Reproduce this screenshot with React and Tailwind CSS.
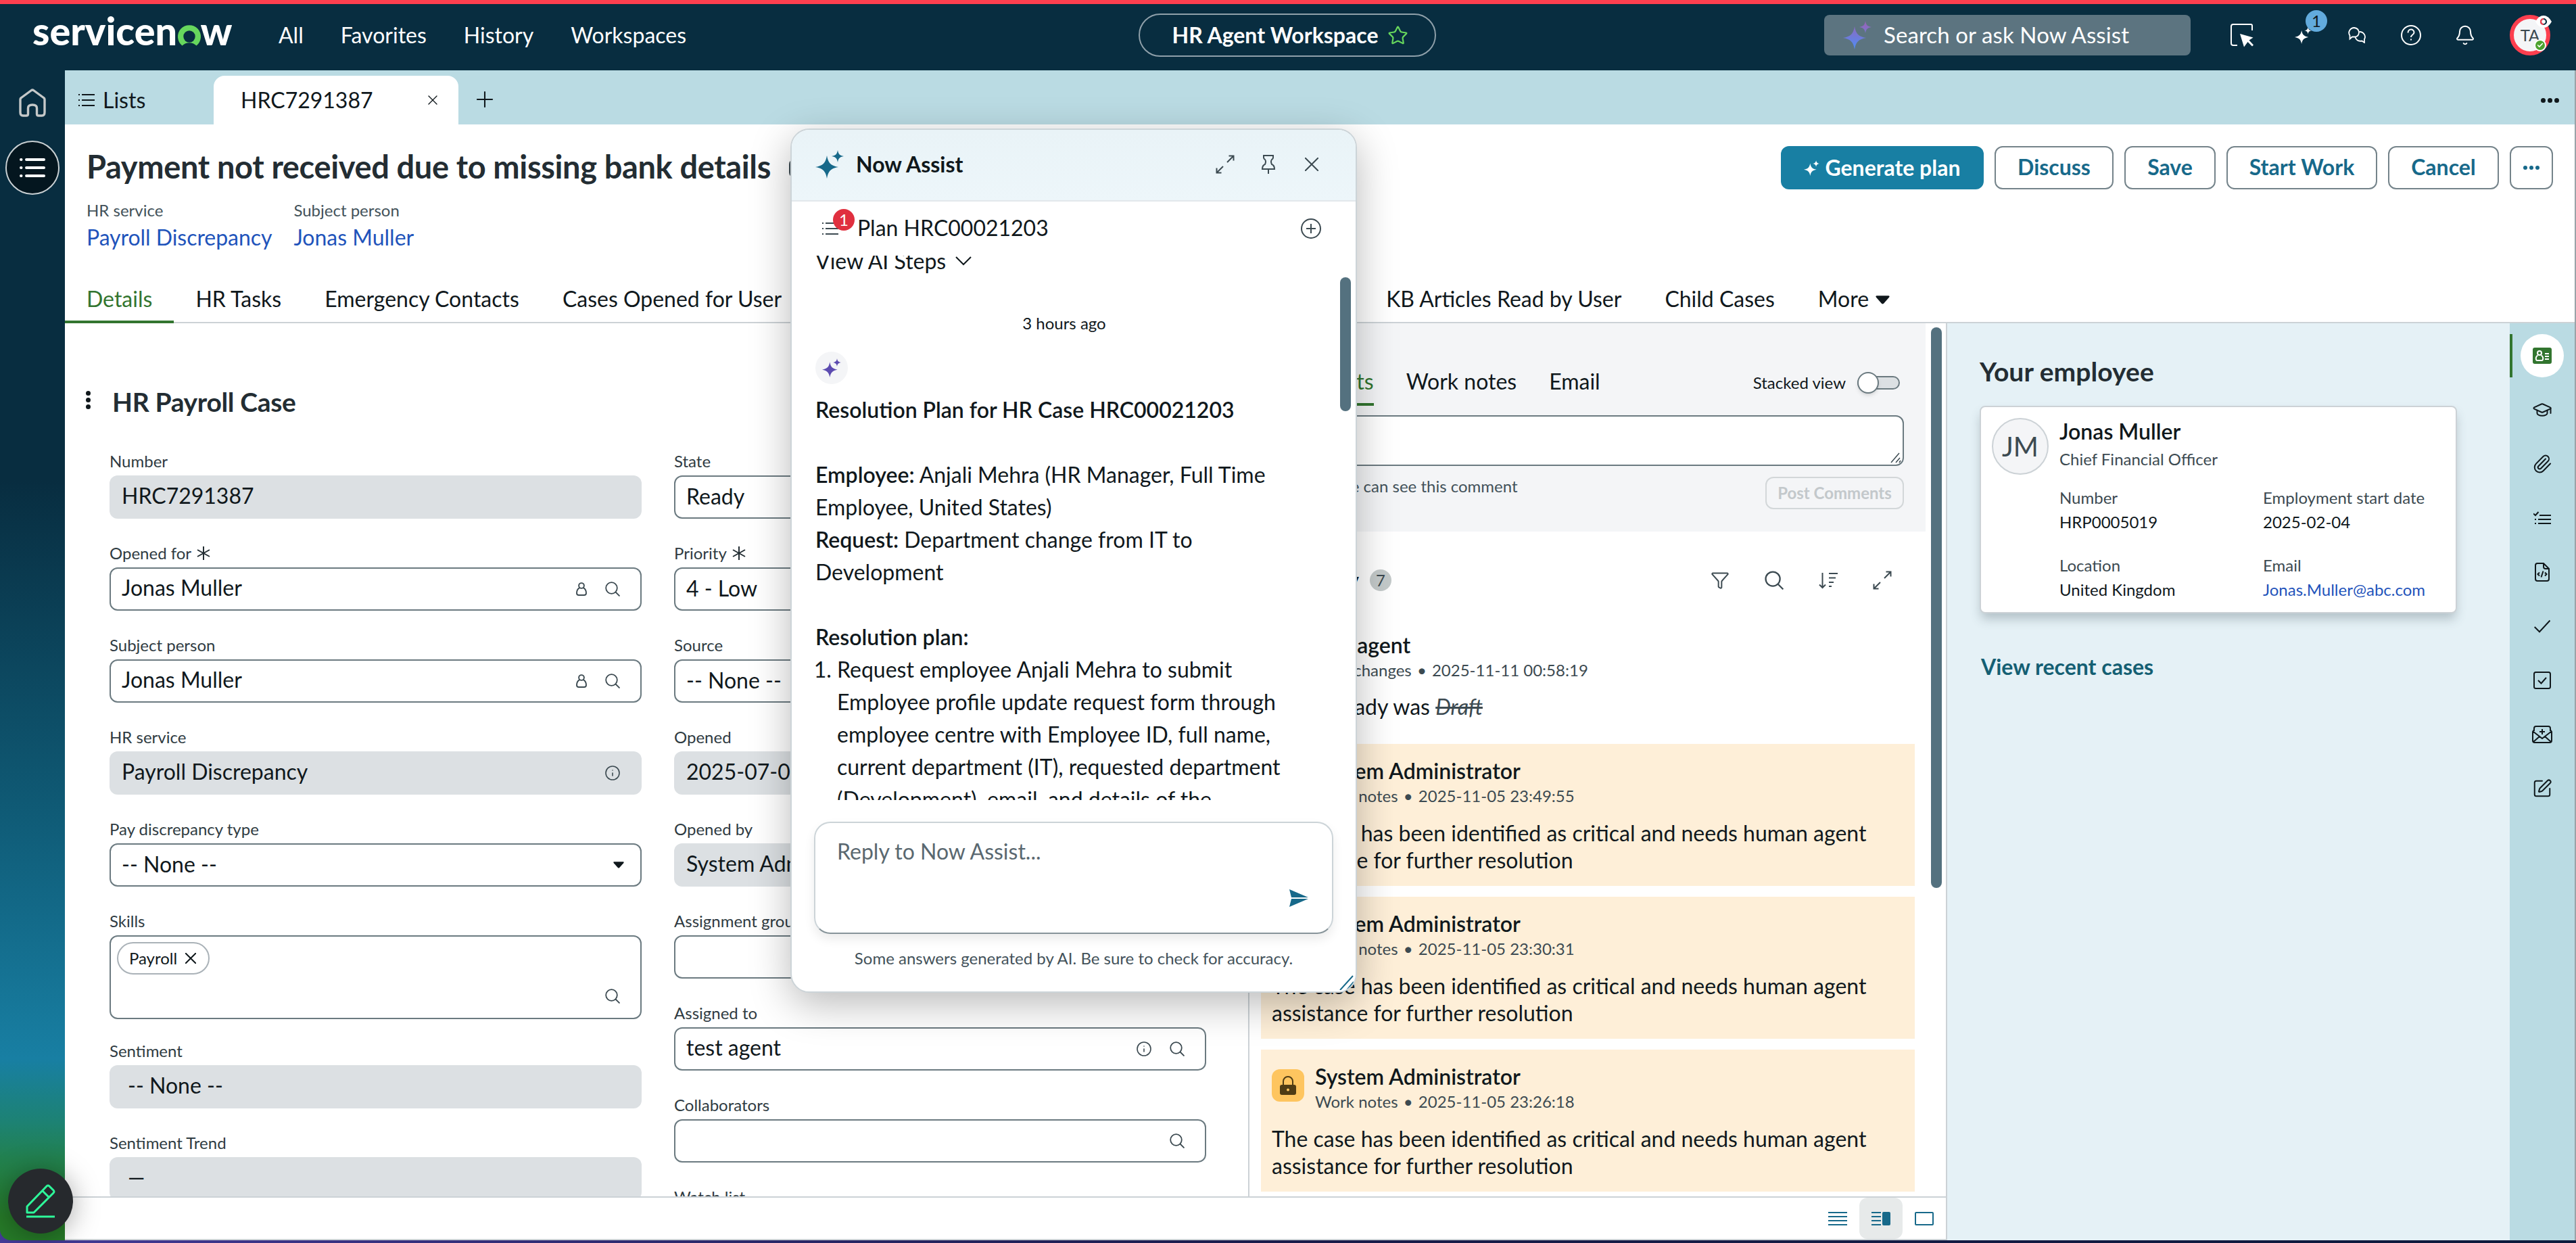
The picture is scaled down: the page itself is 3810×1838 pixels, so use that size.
import React from 'react'
import { Bell, Check, Filter, GraduationCap, Info, Paperclip, Plus, SquarePen, Star, X } from 'lucide-react'

const heading = "font-['Lato','Open_Sans',sans-serif] font-bold"

function Sparkle({ className, fill = 'currentColor' }) {
  return (
    <svg viewBox="0 0 42 42" className={className} fill={fill}>
      <defs>
        <linearGradient id="sparkle" x1="0" y1="0" x2="0" y2="1">
          <stop offset="0" stopColor="#9a62b4" />
          <stop offset="1" stopColor="#4f8df5" />
        </linearGradient>
      </defs>
      <path d="M17 8C18.8 19 23 23 34 25C23 27 18.8 31 17 42C15.2 31 11 27 0 25C11 23 15.2 19 17 8ZM33 0C34 6 36 8 42 9C36 10 34 12 33 18C32 12 30 10 24 9C30 8 32 6 33 0Z" />
    </svg>
  )
}

function ListIcon({ className, thick = 2 }) {
  return (
    <svg viewBox="0 0 24 20" className={className} stroke="currentColor" strokeWidth={thick} fill="none">
      <path d="M0 2H2M0 10H2M0 18H2M5 2H24M5 10H24M5 18H24" />
    </svg>
  )
}

function PersonIcon({ className }) {
  return (
    <svg viewBox="0 0 16 20" className={className} stroke="currentColor" strokeWidth="1.900" fill="none">
      <circle cx="8" cy="5" r="3.900" />
      <path d="M5.200 8.200C2 10 1 13 1 16Q1 19 4 19H12Q15 19 15 16C15 13 14 10 10.800 8.200" />
    </svg>
  )
}

function SearchIcon({ className }) {
  return (
    <svg viewBox="0 0 22 22" className={className} stroke="currentColor" strokeWidth="1.800" fill="none">
      <circle cx="9.500" cy="9.500" r="8.300" />
      <path d="M15.500 15.500L21.500 21.500" />
    </svg>
  )
}

function ExpandIcon({ className }) {
  return (
    <svg viewBox="0 0 28 28" className={className} stroke="currentColor" strokeWidth="2" fill="none">
      <path d="M17 11L26.500 1.500M19.500 1.500H26.500V8.500M11 17L1.500 26.500M1.500 19.500V26.500H8.500" />
    </svg>
  )
}

function Caret({ className }) {
  return (
    <svg viewBox="0 0 20 12" className={className} fill="currentColor">
      <path d="M1.500 0H18.500Q20.500 .5 19 2.500L11.500 11Q10 12.500 8.500 11L1 2.500Q-.5 .5 1.500 0Z" />
    </svg>
  )
}

function Asterisk() {
  return (
    <svg viewBox="0 0 20 20" className="w-5 h-5 ml-2" stroke="#232d33" strokeWidth="2" fill="none">
      <path d="M10 0V20M1 5L19 15M19 5L1 15" />
    </svg>
  )
}

function Field({ label, value, required, readOnly, select, icons = [], indent, className = '' }) {
  return (
    <div className={className || 'mb-[30px]'}>
      <div className="h-[42px] flex items-center text-2xl text-[#2f3b42]">
        {label}
        {required && <Asterisk />}
      </div>
      <div className={`h-16 rounded-xl flex items-center justify-between text-[32px] text-[#10181c] ${readOnly ? 'bg-[#dce0e3]' : 'bg-white border-2 border-[#6b7a80]'} ${indent ? 'pl-[27px]' : readOnly ? 'pl-[18px]' : 'pl-4'} ${readOnly ? 'pr-8' : 'pr-[30px]'}`}>
        <span className={`whitespace-nowrap ${select ? 'pb-0.5' : 'pb-1'}`}>{value}</span>
        <div className="flex items-center gap-[27px] text-[#3c4a51]">
          {icons.includes('person') && <PersonIcon className="w-4 h-5" />}
          {icons.includes('info') && <Info size={24} strokeWidth={1.6} className="-m-px" />}
          {icons.includes('search') && <SearchIcon className="w-[22px] h-[22px]" />}
          {select && <Caret className="w-4 h-2.5 mr-[-6px] text-[#10181c]" />}
        </div>
      </div>
    </div>
  )
}

function WorkNote({ time }) {
  return (
    <div className="h-[210px] mb-4 bg-[#feefd8] pl-4 pt-5 shrink-0">
      <div className="flex gap-4">
        <div className="w-12 h-12 mt-[9px] rounded-xl bg-[#fec55f] flex items-center justify-center">
          <svg viewBox="0 0 24 28" className="w-6 h-7">
            <path d="M5 14V8A7 7 0 0 1 19 8V14" fill="none" stroke="#4f3c14" strokeWidth="2" />
            <rect x="0" y="13" width="24" height="15" rx="3" fill="#4f3c14" />
            <circle cx="12" cy="20.500" r="2" fill="#fec55f" />
          </svg>
        </div>
        <div>
          <div className="text-[32px] leading-10 font-semibold text-[#10181c]">System Administrator</div>
          <div className="text-2xl leading-[33px] text-[#3c4a51]">Work notes <span className="mx-[2px]">•</span> {time}</div>
        </div>
      </div>
      <p className="mt-[19px] text-[32px] leading-10 text-[#10181c] w-[920px]">
        The case has been identified as critical and needs human agent assistance for further resolution
      </p>
    </div>
  )
}

function Header() {
  return (
    <header className="h-[104px] shrink-0 border-t-[6px] border-[#fd3f4f] bg-[#082d40] pb-1.5 pl-9 pr-[38px] flex items-center text-white text-[32px]">
      <div className="flex-1 flex items-center">
        <svg viewBox="0 0 300 60" className="w-[300px] h-[60px] ml-[11px] overflow-visible">
          <text x="1" y="44.500" fontFamily="Lato" fontWeight="900" fontSize="57" fill="#fff" textLength="214" lengthAdjust="spacingAndGlyphs">servicen</text>
          <path d="M222.500 45.500A17 17 0 1 1 243.500 45.500A15 15 0 0 0 222.500 45.500Z" fill="#67d75d" />
          <circle cx="233" cy="32" r="8.700" fill="#082d40" />
          <text x="249.500" y="44.500" fontFamily="Lato" fontWeight="900" fontSize="57" fill="#fff" textLength="47" lengthAdjust="spacingAndGlyphs">w</text>
        </svg>
        <nav className="flex gap-[55px] ml-[65px]">
          <span>All</span>
          <span>Favorites</span>
          <span>History</span>
          <span>Workspaces</span>
        </nav>
      </div>
      <div className="w-[440px] h-16 pl-[9px] rounded-full border-2 border-[#8fa0aa] flex items-center justify-center gap-3.5 font-bold whitespace-nowrap">
        HR Agent Workspace
        <Star size={31} strokeWidth={1.7} color="#67d75d" />
      </div>
      <div className="flex-1 flex items-center justify-end">
        <div className="w-[542px] h-[60px] rounded-lg bg-[#5c7480] flex items-center pl-7 gap-[18px]">
          <Sparkle className="w-[42px] h-[42px]" fill="url(#sparkle)" />
          <span className="text-[33px] tracking-[0.1px]">Search or ask Now Assist</span>
        </div>
        <svg viewBox="0 0 36 36" className="w-9 h-9 ml-[58px]" fill="none" stroke="#fff" strokeWidth="2">
          <path d="M11 33H5Q2 33 2 30V5Q2 2 5 2H31Q33 2 33 4V11" />
          <path d="M15 16L34.500 21.500L28.500 25.500L35 32.500L33 34.500L26.500 28L21 35.500Z" fill="#fff" stroke="none" />
        </svg>
        <div className="relative w-20 flex justify-center ml-8">
          <Sparkle className="w-[25px] h-[25px]" />
          <span className="absolute left-[44px] -top-[25px] w-8 h-8 rounded-full bg-[#62abdd] text-[#10181c] text-2xl flex items-center justify-center">1</span>
        </div>
        <svg viewBox="0 0 28 24" className="w-7 h-6 mx-[26px]" fill="none" stroke="#fff" strokeWidth="1.800">
          <path d="M10 1A8.500 7.500 0 0 1 17 7.500Q17 13 12 14.500L7 14.500L3.500 17.500V12.500A8 7.500 0 0 1 10 1Z" />
          <path d="M17.500 7A8 7.500 0 0 1 25 18V23L21.500 20.500Q14 22 11.500 15" />
        </svg>
        <svg viewBox="0 0 32 32" className="w-8 h-8 mx-6" fill="none" stroke="#fff" strokeWidth="2">
          <circle cx="16" cy="16" r="14" />
          <path d="M11.500 12.500C11.500 6 20.500 6 20.500 12C20.500 15.500 16 15 16 19M16 21.500V23.500" />
        </svg>
        <Bell size={32} strokeWidth={1.5} className="mx-6" />
        <div className="relative w-[60px] h-[60px] ml-[26px] rounded-full border-[6px] border-[#fd3f4f] bg-[#f4f5f7] flex items-center justify-center text-2xl text-[#3c4a51]">
          TA
          <svg viewBox="0 0 24 18" className="absolute left-[32px] -top-[5px] w-6 h-[18px]">
            <path d="M0 9Q5 0 12 0T24 9Q19 18 12 18T0 9Z" fill="#fff" />
            <circle cx="12" cy="9" r="4" fill="#fff" stroke="#082d40" strokeWidth="2.200" />
            <path d="M12 5A4 4 0 0 0 12 13" fill="none" stroke="#fd3f4f" strokeWidth="2.200" />
          </svg>
          <span className="absolute left-[30px] top-[30px] w-[18px] h-[18px] rounded-full bg-[#4da32f] border-2 border-white flex items-center justify-center">
            <Check size={10} strokeWidth={4} color="#fff" />
          </span>
        </div>
      </div>
    </header>
  )
}

function SideNav() {
  return (
    <aside className="w-24 shrink-0 rounded-bl-2xl flex flex-col items-center bg-[linear-gradient(180deg,#082d40_0%,#082d40_35%,#0f5a75_63%,#187fa3_84.5%,#1d8272_90%,#22814f_93%,#267a28_98%)]">
      <svg viewBox="0 0 40 42" className="w-10 h-[42px] mt-[27px]" fill="none" stroke="#c5c8c8" strokeWidth="3.400" strokeLinejoin="round">
        <path d="M2 16Q2 14.500 3.500 13.500L18.500 2.500Q20 1.500 21.500 2.500L36.500 13.500Q38 14.500 38 16V35Q38 40 34 40H29Q26.500 40 26.500 37.500V29Q26.500 24 20 24T13.500 29V37.500Q13.500 40 11 40H6Q2 40 2 35Z" />
      </svg>
      <div className="w-20 h-20 mt-[35px] rounded-full border-2 border-[#c9d0d3] bg-[#04161f] flex items-center justify-center">
        <svg viewBox="0 0 38 28" className="w-[38px] h-7" stroke="#fff" strokeWidth="4" strokeLinecap="round">
          <path d="M2 2H2.500M2 14H2.500M2 26H2.500M10 2H36M10 14H36M10 26H36" />
        </svg>
      </div>
    </aside>
  )
}

function TabStrip() {
  return (
    <div className="h-20 shrink-0 bg-[#badbe3] flex items-end text-[32px] text-[#10181c] pr-[23px]">
      <div className="w-[220px] h-[72px] flex items-center pl-5 gap-3">
        <ListIcon className="w-6 h-5" />
        <span>Lists</span>
      </div>
      <div className="w-[362px] h-[72px] bg-white rounded-t-2xl flex items-center justify-between pl-10 pr-[26px]">
        <span>HRC7291387</span>
        <X size={24} strokeWidth={1.4} />
      </div>
      <div className="h-[72px] flex items-center pl-5 pb-0.5">
        <Plus size={38} strokeWidth={1.3} />
      </div>
      <div className="ml-auto h-[72px] flex items-center gap-[3px]">
        {[0, 1, 2].map(i => <span key={i} className="w-[7px] h-[7px] rounded-full bg-[#10181c]" />)}
      </div>
    </div>
  )
}

function RecordHeader() {
  const actions = [
    { label: 'Discuss', width: 'w-[176px]' },
    { label: 'Save', width: 'w-[135px]' },
    { label: 'Start Work', width: 'w-[223px]' },
    { label: 'Cancel', width: 'w-[164px]' }
  ]

  return (
    <div className="h-[294px] shrink-0 bg-white flex flex-col">
      <div className="flex pl-8 pr-8 pt-8">
        <h1 className={`${heading} -mt-0.5 text-[47px] leading-[64px] tracking-[-0.37px] text-[#232d33] whitespace-nowrap`}>
          Payment not received due to missing bank details
        </h1>
        <span className="w-7 h-7 mt-[19px] ml-[27px] rounded-lg border-2 border-[#3c4a51]" />
        <div className="ml-auto flex gap-4 text-[32px] font-bold text-[#17698a]">
          <div className="w-[300px] h-16 rounded-xl bg-[#187fa3] text-white flex items-center justify-center gap-2">
            <Sparkle className="w-[23px] h-[23px]" />
            Generate plan
          </div>
          {actions.map(action => (
            <div key={action.label} className={`${action.width} h-16 rounded-xl border-2 border-[#74838a] flex items-center justify-center whitespace-nowrap pb-0.5`}>
              {action.label}
            </div>
          ))}
          <div className="w-16 h-16 rounded-xl border-2 border-[#74838a] flex items-center justify-center gap-[3px]">
            {[0, 1, 2].map(i => <span key={i} className="w-[6px] h-[6px] rounded-full bg-[#17698a]" />)}
          </div>
        </div>
      </div>
      <div className="flex gap-8 pl-8 mt-[15px] whitespace-nowrap">
        <div>
          <div className="text-2xl leading-8 text-[#43525a]">HR service</div>
          <div className="text-[32px] leading-[48px] tracking-[-0.05px] text-[#1f54bb]">Payroll Discrepancy</div>
        </div>
        <div>
          <div className="text-2xl leading-8 text-[#43525a]">Subject person</div>
          <div className="text-[32px] leading-[48px] text-[#1f54bb]">Jonas Muller</div>
        </div>
      </div>
      <nav className="mt-auto h-[69px] flex border-b-2 border-[#ccd2d6] text-[32px] text-[#10181c] whitespace-nowrap">
        <span className="px-8 pt-[9px] h-[69px] border-b-4 border-[#32752f] text-[#32752f]">Details</span>
        <span className="px-8 pt-[9px]">HR Tasks</span>
        <span className="px-8 pt-[9px]">Emergency Contacts</span>
        <span className="px-8 pt-[9px]">Cases Opened for User</span>
        <span className="px-8 pt-[9px] ml-[830px]">KB Articles Read by User</span>
        <span className="px-8 pt-[9px]">Child Cases</span>
        <span className="px-8 pt-[9px] flex items-start gap-2.5">More <Caret className="w-[21px] h-[13px] mt-[19px]" /></span>
      </nav>
    </div>
  )
}

function CaseForm() {
  return (
    <section className="w-[1752px] shrink-0 h-full overflow-hidden bg-white border-r-2 border-[#ccd2d6]">
      <div className="flex items-center h-16 mt-[83px] pl-[31px]">
        <div className="flex flex-col gap-[3px] w-[39px] pb-1">
          {[0, 1, 2].map(i => <span key={i} className="w-[7px] h-[7px] rounded-full bg-[#10181c]" />)}
        </div>
        <h2 className={`${heading} pt-0.5 text-[39px] tracking-[-0.35px] text-[#232d33]`}>HR Payroll Case</h2>
      </div>
      <div className="grid grid-cols-[787px_787px] gap-12 pl-[66px] mt-9">
        <div>
          <Field label="Number" value="HRC7291387" readOnly />
          <Field label="Opened for" value="Jonas Muller" required icons={['person', 'search']} />
          <Field label="Subject person" value="Jonas Muller" icons={['person', 'search']} />
          <Field label="HR service" value="Payroll Discrepancy" readOnly icons={['info']} />
          <Field label="Pay discrepancy type" value="-- None --" select />
          <div className="mb-[26px]">
            <div className="h-[42px] flex items-center text-2xl text-[#2f3b42]">Skills</div>
            <div className="h-[124px] rounded-xl border-2 border-[#6b7a80] pl-[9px] pt-2 pr-[30px] flex justify-between">
              <div className="w-[137px] h-12 pr-0.5 rounded-full border-2 border-[#aab2b8] flex items-center justify-center gap-3 text-2xl text-[#10181c]">
                Payroll
                <svg viewBox="0 0 16 16" className="w-4 h-4" stroke="currentColor" strokeWidth="2"><path d="M0 0L16 16M16 0L0 16" /></svg>
              </div>
              <SearchIcon className="w-[22px] h-[22px] mt-[69px] text-[#3c4a51]" />
            </div>
          </div>
          <Field label="Sentiment" value="-- None --" readOnly indent />
          <Field label="Sentiment Trend" value="—" readOnly indent />
        </div>
        <div>
          <Field label="State" value="Ready" select />
          <Field label="Priority" value="4 - Low" required select />
          <Field label="Source" value="-- None --" select />
          <Field label="Opened" value="2025-07-03 04:12:55" readOnly />
          <Field label="Opened by" value="System Administrator" readOnly />
          <Field label="Assignment group" value="" icons={['search']} />
          <Field label="Assigned to" value="test agent" icons={['info', 'search']} />
          <Field label="Collaborators" value="" icons={['search']} />
          <Field label="Watch list" value="" />
        </div>
      </div>
    </section>
  )
}

function ActivityPane() {
  return (
    <section className="w-[1030px] shrink-0 h-full bg-white flex justify-between pl-0.5 pr-1.5 pt-0">
      <div className="w-[998px] h-full overflow-hidden flex flex-col">
        <div className="h-[308px] shrink-0 bg-[#f4f5f7] pl-[30px] pr-8 pt-[60px] text-[#10181c]">
          <div className="flex justify-between items-start pr-1.5">
            <div className="flex gap-12 text-[32px] leading-[52px]">
              <span className="text-[#32752f] border-b-4 border-[#32752f] h-[62px]">Comments</span>
              <span>Work notes</span>
              <span>Email</span>
            </div>
            <div className="flex items-center gap-[17px] text-2xl h-14">
              Stacked view
              <div className="relative w-[63px] h-5 rounded-full bg-[#dce0e3] border-2 border-[#6b7a80]">
                <span className="absolute -left-0.5 -top-2 w-8 h-8 rounded-full bg-white border-2 border-[#6b7a80] shadow-md"></span>
              </div>
            </div>
          </div>
          <div className="relative h-[75px] mt-[14px] rounded-xl border-2 border-[#6b7a80] bg-white">
            <svg viewBox="0 0 16 16" className="absolute right-0.5 bottom-0.5 w-4 h-4" stroke="#3c4a51" strokeWidth="1.500">
              <path d="M1 15L13 1M8 15L14 8M13 15L15 12" />
            </svg>
          </div>
          <div className="flex justify-between">
            <span className="text-2xl text-[#43525a] mt-[14px] ml-8">Everyone can see this comment</span>
            <span className="w-[205px] h-12 mt-4 rounded-xl border-2 border-[#d3d7d9] text-2xl font-bold text-[#c3c8cb] flex items-center justify-center">Post Comments</span>
          </div>
        </div>
        <div className="flex justify-between items-center mt-14 h-8 shrink-0 pl-[30px] pr-[50px] text-[#3c4a51]">
          <div className="flex items-center gap-4 w-[178px] justify-end">
            <span className={`${heading} text-[32px] text-[#10181c]`}>Activity</span>
            <span className="w-8 h-8 rounded-full bg-[#c4caca] text-2xl flex items-center justify-center">7</span>
          </div>
          <div className="flex items-center gap-[52px]">
            <Filter size={28} strokeWidth={1.7} />
            <SearchIcon className="w-7 h-7" />
            <svg viewBox="0 0 28 26" className="w-7 h-[26px]" stroke="currentColor" strokeWidth="2" fill="none">
              <path d="M5.500 2V24M1 19.500L5.500 24L10 19.500M15 3H28M15 9.500H25M15 16H22M15 22H19" />
            </svg>
            <ExpandIcon className="w-7 h-7" />
          </div>
        </div>
        <div className="mt-12 pl-[15px] pr-4">
          <div className="h-[178px] pl-4 pt-[12px] shrink-0">
            <div className="pl-16">
              <div className="text-[32px] leading-10 font-semibold text-[#10181c]">test agent</div>
              <div className="text-2xl leading-[33px] text-[#3c4a51]">Field changes <span className="mx-[2px]">•</span> 2025-11-11 00:58:19</div>
            </div>
            <div className="mt-[18px] text-[32px] leading-10 text-[#10181c]">
              State <span className="ml-1.5">Ready was</span> <em className="line-through text-[#3c4a51]">Draft</em>
            </div>
          </div>
          <WorkNote time="2025-11-05 23:49:55" />
          <WorkNote time="2025-11-05 23:30:31" />
          <WorkNote time="2025-11-05 23:26:18" />
        </div>
      </div>
      <div className="w-4 h-[829px] mt-1.5 rounded-full bg-[#54717f]" />
    </section>
  )
}

function LayoutFooter() {
  return (
    <footer className="h-[65px] shrink-0 bg-white border-t-2 border-b-2 border-[#ccd2d6] flex justify-end items-center text-[#17698a]">
      <div className="w-16 flex justify-center">
        <svg viewBox="0 0 28 20" className="w-7 h-5" stroke="currentColor" strokeWidth="2"><path d="M0 1H28M0 7H28M0 13H28M0 19H28" /></svg>
      </div>
      <div className="w-16 h-[61px] rounded-xl bg-[#e7eaea] flex items-center justify-center">
        <svg viewBox="0 0 28 20" className="w-7 h-5" stroke="currentColor" strokeWidth="2"><path d="M0 1H14M0 7H14M0 13H14M0 19H14" /><rect x="17" y="1" width="10" height="18" rx="1" fill="currentColor" /></svg>
      </div>
      <div className="w-16 flex justify-center">
        <svg viewBox="0 0 28 20" className="w-7 h-5" stroke="currentColor" strokeWidth="2" fill="none"><rect x="1" y="1" width="26" height="18" rx="1" /></svg>
      </div>
    </footer>
  )
}

function EmployeePanel() {
  const details = [
    { label: 'Number', value: 'HRP0005019' },
    { label: 'Employment start date', value: '2025-02-04' },
    { label: 'Location', value: 'United Kingdom' },
    { label: 'Email', value: 'Jonas.Muller@abc.com', link: true }
  ]

  return (
    <section className="w-[834px] shrink-0 bg-[#e5f1f6] border-l-2 border-[#ccd2d6] pl-12 pt-[39px]">
      <h2 className={`${heading} text-[39px] leading-[64px] tracking-[0.05px] text-[#232d33]`}>Your employee</h2>
      <div className="w-[706px] h-[307px] mt-[19px] rounded-lg border-2 border-[#ccd2d6] bg-white shadow-[0_10px_16px_-2px_rgba(60,80,90,0.3)] pl-4 pt-4 flex gap-4">
        <div className="w-[84px] h-[84px] rounded-full border-2 border-[#ccd2d6] bg-[#f4f5f7] text-[40px] text-[#3c4a51] flex items-center justify-center">JM</div>
        <div>
          <div className="text-[32px] leading-10 font-semibold text-[#10181c]">Jonas Muller</div>
          <div className="text-2xl leading-[42px] text-[#3c4a51]">Chief Financial Officer</div>
          <div className="grid grid-cols-[301px_260px] gap-y-7 mt-[18px] text-2xl leading-9 whitespace-nowrap">
            {details.map(item => (
              <div key={item.label}>
                <div className="text-[#3c4a51]">{item.label}</div>
                <div className={item.link ? 'text-[#1f54bb]' : 'text-[#10181c]'}>{item.value}</div>
              </div>
            ))}
          </div>
        </div>
      </div>
      <div className={`${heading} mt-[59px] pl-0.5 text-[32px] leading-10 text-[#145f73]`}>View recent cases</div>
    </section>
  )
}

function ContextRail() {
  return (
    <aside className="w-24 shrink-0 bg-[#badbe3] pt-4 flex flex-col items-center gap-4 text-[#10181c]">
      <div className="w-24 h-16 border-l-4 border-[#32752f] flex items-center justify-center pr-1">
        <div className="w-16 h-16 rounded-full bg-white flex items-center justify-center">
          <svg viewBox="0 0 28 24" className="w-7 h-6" fill="none" stroke="#fff" strokeWidth="2">
            <rect width="28" height="24" rx="3" fill="#32752f" stroke="none" />
            <circle cx="10" cy="8" r="3" />
            <path d="M7.500 11.500C3 14 5 19 6.500 19H13.500C15 19 17 14 12.500 11.500M18 9H24M18 13H24M18 17H24" />
          </svg>
        </div>
      </div>
      <div className="h-16 flex items-center"><GraduationCap size={30} strokeWidth={1.6} /></div>
      <div className="h-16 flex items-center"><Paperclip size={30} strokeWidth={1.6} /></div>
      <div className="h-16 flex items-center">
        <svg viewBox="0 0 26 20" className="w-[26px] h-5" fill="none" stroke="currentColor" strokeWidth="2">
          <path d="M0 3.500L3 6L7.500 1M9 6H26M7 12H26M7 18H26M2 12H4M2 18H4" />
        </svg>
      </div>
      <div className="h-16 flex items-center">
        <svg viewBox="0 0 22 28" className="w-[22px] h-7" fill="none" stroke="currentColor" strokeWidth="2">
          <path d="M13 1H4Q1 1 1 4V24Q1 27 4 27H18Q21 27 21 24V9L13 1V6Q13 9 16 9H21M12.500 12.500L9.500 21.500M7 14.500L4.500 17L7 19.500M15 14.500L17.500 17L15 19.500" />
        </svg>
      </div>
      <div className="h-16 flex items-center">
        <svg viewBox="0 0 24 20" className="w-6 h-5" fill="none" stroke="currentColor" strokeWidth="2"><path d="M.7 11L8 18.300L23.500 1.500" /></svg>
      </div>
      <div className="h-16 flex items-center">
        <svg viewBox="0 0 26 26" className="w-[26px] h-[26px]" fill="none" stroke="currentColor" strokeWidth="2"><rect x="1" y="1" width="24" height="24" rx="2.500" /><path d="M7 13L11.500 17.500L19 9" /></svg>
      </div>
      <div className="h-16 flex items-center">
        <svg viewBox="0 0 30 26" className="w-[30px] h-[26px]" fill="none" stroke="currentColor" strokeWidth="2">
          <path d="M3 8V4Q3 1 6 1H24Q27 1 27 4V8M3 6L1 9V22Q1 25 4 25H26Q29 25 29 22V9L27 6M2 9L15 19L28 9M2 24L11 16M28 24L19 16M15 5V13M11 9H19" />
        </svg>
      </div>
      <div className="h-16 flex items-center">
        <SquarePen size={30} strokeWidth={1.6} />
      </div>
    </aside>
  )
}

function NowAssistPanel() {
  return (
    <div className="absolute left-[1169px] top-[190px] w-[838px] h-[1278px] rounded-[28px] border-2 border-[#ccd4d8] bg-white shadow-[0_16px_60px_rgba(0,0,0,0.28)] overflow-hidden flex flex-col text-[#10181c]">
      <div className="h-[106px] shrink-0 bg-linear-to-b from-[#e9f3f7] to-[#edf6fa] border-b-2 border-[#e2e8eb] flex items-center pl-[35px] pr-[55px] pb-[2px]">
        <Sparkle className="w-[42px] h-[42px] text-[#17698a]" />
        <span className="ml-[18px] text-[32px] font-bold">Now Assist</span>
        <div className="ml-auto flex items-center gap-10 text-[#3c4a51]">
          <ExpandIcon className="w-7 h-7" />
          <svg viewBox="0 0 20 28" className="w-5 h-7" stroke="currentColor" strokeWidth="2" fill="none">
            <path d="M3 1H17V4Q17 6 15 7Q13 9.500 15 14Q19 15.500 19 21H1Q1 15.500 5 14Q7 9.500 5 7Q3 6 3 4ZM10 21V28" />
          </svg>
          <svg viewBox="0 0 20 20" className="w-5 h-5 ml-1" stroke="currentColor" strokeWidth="2"><path d="M0 0L20 20M20 0L0 20" /></svg>
        </div>
      </div>
      <div className="h-20 shrink-0 relative flex items-center pl-[45px] pr-[50px] text-[32px]">
        <ListIcon className="w-6 h-5 text-[#3c4a51]" />
        <span className="absolute left-[61px] top-[11px] w-8 h-8 rounded-full bg-[#e0303f] text-white text-2xl flex items-center justify-center">1</span>
        <span className="ml-7 pb-0.5">Plan HRC00021203</span>
        <svg viewBox="0 0 32 32" className="w-8 h-8 ml-auto" stroke="#3c4a51" strokeWidth="2" fill="none">
          <circle cx="16" cy="16" r="14" /><path d="M16 9V23M9 16H23" />
        </svg>
      </div>
      <div className="relative h-[805px] shrink-0 overflow-hidden pl-[35px] pr-[99px] text-[32px] leading-[48px]">
        <div className="-mt-4 flex items-center gap-3.5">
          View AI Steps
          <svg viewBox="0 0 24 14" className="w-6 h-3.5" stroke="currentColor" strokeWidth="2" fill="none"><path d="M1 1L12 12L23 1" /></svg>
        </div>
        <div className="mt-11 mr-[-36px] text-2xl leading-[48px] text-center text-[#10181c]">3 hours ago</div>
        <div className="w-12 h-12 mt-[18px] mb-3.5 rounded-full bg-[#f4f5f7] flex items-center justify-center">
          <Sparkle className="w-7 h-7 text-[#5c4bb0]" />
        </div>
        <div className="font-semibold whitespace-nowrap">Resolution Plan for HR Case HRC00021203</div>
        <div className="mt-12"><span className="font-semibold">Employee:</span> Anjali Mehra (HR Manager, Full Time Employee, United States)</div>
        <div className="w-[600px]"><span className="font-semibold">Request:</span> Department change from IT to Development</div>
        <div className="mt-12 font-semibold">Resolution plan:</div>
        <ol className="list-decimal pl-8">
          <li className="whitespace-nowrap">
            Request employee Anjali Mehra to submit<br />
            Employee profile update request form through<br />
            employee centre with Employee ID, full name,<br />
            current department (IT), requested department<br />
            (Development), email, and details of the
          </li>
        </ol>
        <div className="absolute right-[7px] top-8 w-4 h-[198px] rounded-full bg-[#54717f]" />
      </div>
      <div className="w-[768px] h-[166px] mt-8 ml-[33px] shrink-0 rounded-3xl border-2 border-[#ccd4d8] border-b-[#87949a] shadow-[0_8px_16px_rgba(0,0,0,0.08)] flex justify-between pl-8 pr-[35px] pt-[22px] text-[32px] leading-10 text-[#5a6870]">
        Reply to Now Assist...
        <svg viewBox="0 0 28 26" className="w-7 h-[26px] mt-[76px]" fill="#17698a"><path d="M0 0L28 12H3ZM0 26L28 14H3Z" /></svg>
      </div>
      <div className="mt-5 text-2xl leading-8 text-center text-[#43525a]">Some answers generated by AI. Be sure to check for accuracy.</div>
      <svg viewBox="0 0 22 22" className="absolute right-0.5 bottom-0.5 w-[22px] h-[22px]" stroke="#17698a" strokeWidth="2"><path d="M1 22L20 1M11 22L21 10" /></svg>
    </div>
  )
}

export default function App() {
  return (
    <div className="relative w-screen h-screen overflow-hidden flex flex-col bg-linear-to-r from-[#443a97] via-[#181b4a] to-[#0c1a3c] font-['Lato','Open_Sans',sans-serif] leading-normal">
      <Header />
      <div className="h-[1730px] shrink-0 flex">
        <SideNav />
        <div className="flex-1 min-w-0 flex flex-col">
          <TabStrip />
          <RecordHeader />
          <div className="flex-1 min-h-0 flex">
            <div className="w-[2782px] shrink-0 flex flex-col bg-white">
              <div className="flex-1 min-h-0 flex">
                <CaseForm />
                <ActivityPane />
              </div>
              <LayoutFooter />
            </div>
            <EmployeePanel />
            <ContextRail />
          </div>
        </div>
        <div className="w-0.5 shrink-0 bg-[#9aa3a8]" />
      </div>
      <NowAssistPanel />
      <div className="absolute left-3 top-[1728px] w-24 h-24 rounded-full bg-[#26292d] shadow-[0_4px_40px_rgba(0,0,0,0.35)] flex items-center justify-center">
        <svg viewBox="0 0 44 50" className="w-11 h-[50px]" fill="none" stroke="#2ef79a" strokeWidth="3" strokeLinejoin="round">
          <path d="M2 42V33L31 3Q33 1 35 3L41 9Q43 11 41 13L12 42ZM25 10L34 19M1 48H43" />
        </svg>
      </div>
    </div>
  )
}
